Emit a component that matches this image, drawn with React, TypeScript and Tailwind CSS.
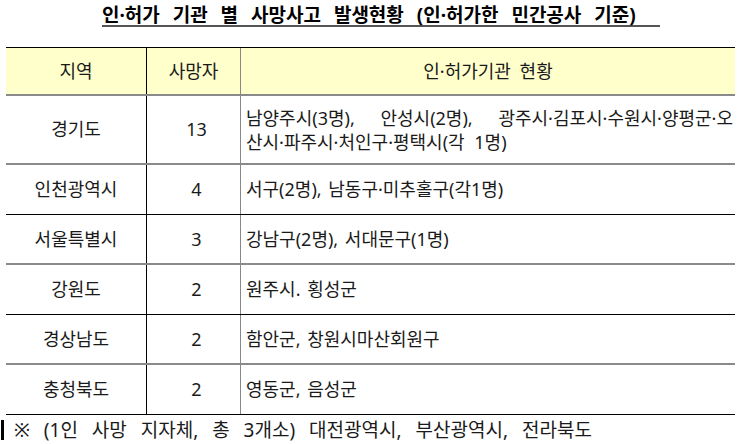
const rows = [
  { region: '인천광역시', deaths: '4', detail: '서구(2명), 남동구·미추홀구(각1명)', line: 'border-b border-black' },
  { region: '서울특별시', deaths: '3', detail: '강남구(2명), 서대문구(1명)', line: 'border-b-2 border-[#8a8a8a]' },
  { region: '강원도', deaths: '2', detail: '원주시. 횡성군', line: 'border-b border-black' },
  { region: '경상남도', deaths: '2', detail: '함안군, 창원시마산회원구', line: 'border-b-2 border-[#8a8a8a]' },
  { region: '충청북도', deaths: '2', detail: '영동군, 음성군', line: 'border-b border-black' },
]

export default function App() {
  return (
    <div
      className="w-[745px] h-[444px] bg-white text-[#1a1a1a] overflow-hidden"
      style={{ fontFamily: '"Noto Sans", "Noto Sans CJK KR", sans-serif' }}
    >
      {/* Title */}
      <div className="pt-[4px] pl-[102px]">
        <h1 className="inline-block w-[558px] border-b-2 border-[#555] text-[19px] font-bold leading-[19px] [word-spacing:8px] text-black">
          인·허가 기관 별 사망사고 발생현황 (인·허가한 민간공사 기준)
        </h1>
      </div>

      {/* Table */}
      <div className="ml-[6px] mt-[19px] w-[729px] text-[18px]">
        <div className="flex h-[49px] bg-[#ffffcc] border-t border-black border-b-2 border-b-[#8a8a8a]">
          <div className="w-[141px] flex items-center justify-center border-r border-black">지역</div>
          <div className="w-[94px] flex items-center justify-center border-r border-[#888]">사망자</div>
          <div className="flex-1 flex items-center justify-center [word-spacing:4px]">인·허가기관 현황</div>
        </div>

        <div className="flex h-[69px] border-b-2 border-[#8a8a8a]">
          <div className="w-[141px] flex items-center justify-center border-r border-black">경기도</div>
          <div className="w-[94px] flex items-center justify-center border-r border-[#888] pl-[6px]">13</div>
          <div className="flex-1 flex flex-col justify-center pl-[5px] pr-[2px] leading-[24px]">
            <div className="flex justify-between">
              <span>남양주시(3명),</span>
              <span>안성시(2명),</span>
              <span>광주시·김포시·수원시·양평군·오</span>
            </div>
            <div className="[word-spacing:5px]">산시·파주시·처인구·평택시(각 1명)</div>
          </div>
        </div>

        {rows.map((r) => (
          <div key={r.region} className={`flex h-[50px] ${r.line}`}>
            <div className="w-[141px] flex items-center justify-center border-r border-black">{r.region}</div>
            <div className="w-[94px] flex items-center justify-center border-r border-[#888] pl-[6px]">{r.deaths}</div>
            <div className="flex-1 flex items-center pl-[5px] [word-spacing:2px]">{r.detail}</div>
          </div>
        ))}
      </div>

      {/* Footnote */}
      <div className="flex items-center mt-[4px] h-[22px] text-[19px]">
        <div className="w-[3px] h-[20px] bg-black ml-[1px]" />
        <span className="ml-[10px] [word-spacing:9px]">※ (1인 사망 지자체, 총 3개소) 대전광역시, 부산광역시, 전라북도</span>
      </div>
    </div>
  )
}
